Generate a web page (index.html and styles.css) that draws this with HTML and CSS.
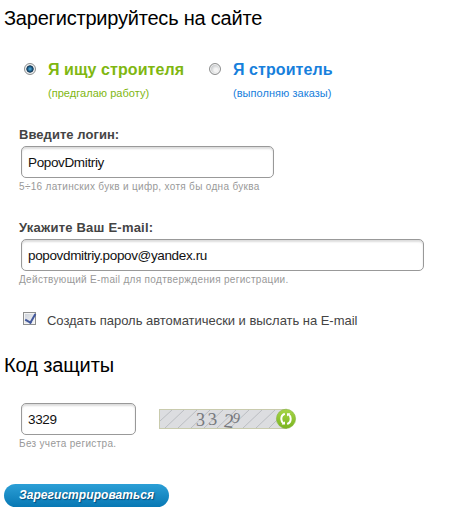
FILE: index.html
```html
<!doctype html>
<html lang="ru">
  <head>
    <meta charset="UTF-8" />
    <title>Регистрация</title>
    <link rel="stylesheet" href="styles.css">
  </head>
  <body>
    <form class="register">
      <h2>Зарегистрируйтесь на сайте</h2>

      <div class="roles">
        <label class="role role-seeker">
          <input type="radio" name="role" checked />
          <span>
            <b>Я ищу строителя</b>
            <small>(предгалаю работу)</small>
          </span>
        </label>
        <label class="role role-builder">
          <input type="radio" name="role" />
          <span>
            <b>Я строитель</b>
            <small>(выполняю заказы)</small>
          </span>
        </label>
      </div>

      <div class="field">
        <label class="title title-login" for="login">Введите логин:</label>
        <input class="text text-login" type="text" id="login" value="PopovDmitriy" />
        <p class="hint hint-login">5÷16 латинских букв и цифр, хотя бы одна буква</p>
      </div>

      <div class="field">
        <label class="title title-email" for="email">Укажите Ваш E-mail:</label>
        <input class="text text-email" type="text" id="email" value="popovdmitriy.popov@yandex.ru" />
        <p class="hint hint-email">Действующий E-mail для подтверждения регистрации.</p>
      </div>

      <label class="auto">
        <input type="checkbox" checked />
        <span>Создать пароль автоматически и выслать на E-mail</span>
      </label>

      <h2 class="h-code">Код защиты</h2>

      <div class="field">
        <div class="code">
          <input class="text text-code" type="text" value="3329" aria-label="Код" />
          <svg class="captcha" width="138" height="22" viewBox="0 0 138 22">
            <defs>
              <linearGradient id="green" x1="0" y1="0" x2="0" y2="1">
                <stop offset="0" stop-color="#a6d548" />
                <stop offset="1" stop-color="#7ab41e" />
              </linearGradient>
            </defs>
            <rect x=".5" y="1.5" width="127" height="19" fill="#dcdde0" stroke="#c9cbad" />
            <path d="M1 13L13 2M6 20L25 2M19 20L38 2M32 20L51 2M45 20L64 2M58 20L77 2M71 20L90 2M84 20L103 2M97 20L116 2M110 20L124 6" stroke="#b3b5ba" stroke-width=".8" />
            <g class="digits">
              <text x="37" y="18.3" font-size="18">3</text>
              <text x="49" y="17" font-size="18" transform="rotate(-5 53 11)">3</text>
              <text x="65" y="19.5" font-size="20" transform="rotate(6 69 13)">2</text>
              <text x="73.5" y="15" font-size="15" transform="rotate(14 77 10)">9</text>
            </g>
            <circle cx="127" cy="10.8" r="9.6" fill="url(#green)" stroke="#86b441" stroke-width=".6" />
            <g fill="none" stroke="#fff" stroke-width="2">
              <path d="M125.8 5.8Q122.3 7 122.3 11Q122.4 14 124.5 15.6" />
              <path d="M128.2 16Q131.7 14.8 131.7 10.8Q131.6 7.8 129.5 6.2" />
            </g>
            <path d="M122.6 16.6H126V13.2ZM131.4 5.2H128V8.6Z" fill="#fff" />
          </svg>
        </div>
        <p class="hint hint-code">Без учета регистра.</p>
      </div>

      <button class="submit" type="button">Зарегистрироваться</button>
    </form>
  </body>
</html>
```
FILE: styles.css
```css
* {
  box-sizing: border-box;
}

body {
  margin: 0;
  background: #fff;
  color: #444;
  font-family: "Liberation Sans", Arial, sans-serif;
  font-size: 13px;
}

.register {
  padding: 6px 4px 0;
}

h2 {
  margin: 0;
  color: #000;
  font-size: 20px;
  font-weight: normal;
  letter-spacing: -0.21px;
  line-height: 24px;
}

.roles {
  display: flex;
  padding-left: 20px;
  margin-top: 30px;
  height: 66px;
}

.role {
  display: flex;
  width: 185px;
}

.role b,
.role small {
  display: block;
  white-space: nowrap;
}

.role b {
  font-size: 16px;
  letter-spacing: 0.08px;
  line-height: 20px;
}

.role small {
  margin-top: 6px;
  font-size: 11px;
  letter-spacing: 0.04px;
  line-height: 14px;
}

.role-seeker {
  color: #7fb711;
}

.role-builder {
  color: #1780dc;
}

input[type="radio"] {
  appearance: none;
  flex: none;
  width: 12px;
  height: 12px;
  margin: 3px 12px 0 0;
  border: 1px solid #8e8f8f;
  border-radius: 50%;
  background: radial-gradient(circle at 60% 60%, #f4f4f4 20%, #c5c8ca 65%);
  box-shadow: inset 0 0 0 1px #f4f4f4;
}

input[type="radio"]:checked {
  background: radial-gradient(circle, #56b6e6 0, #17527c 2.5px, #123049 3.3px, #dce3e7 4px);
}

.field {
  padding-left: 15px;
}

.title {
  display: block;
  font-size: 13px;
  font-weight: bold;
  line-height: 18px;
}

.title-login {
  letter-spacing: 0.05px;
}

.title-email {
  letter-spacing: 0.22px;
}

.text {
  display: block;
  height: 32px;
  margin: 2px 0 0 2px;
  padding: 0 6px;
  border: 1px solid #999;
  border-radius: 5px;
  background: #fff;
  box-shadow: inset 0 2px 2px #ddd;
  color: #111;
  font: 13.5px "Liberation Sans", Arial, sans-serif;
  letter-spacing: -0.36px;
}

.text-login {
  width: 253px;
}

.text-email {
  width: 403px;
}

.text-code {
  width: 115px;
  margin-top: 0;
}

.hint {
  margin: 2px 0 0;
  color: #999;
  font-size: 10px;
  letter-spacing: 0.32px;
  line-height: 14px;
  white-space: nowrap;
}

.hint-login {
  margin-bottom: 25px;
}

.auto {
  display: flex;
  margin: 24px 0 0 19px;
  letter-spacing: -0.03px;
  line-height: 18px;
}

.auto span {
  padding-top: 1px;
}

input[type="checkbox"] {
  appearance: none;
  flex: none;
  width: 13px;
  height: 13px;
  margin: 1px 11px 0 0;
  border: 1px solid #8e8f8f;
  background: linear-gradient(135deg, #cdd2da, #f4f5f7);
  box-shadow: inset 0 0 0 1px #f4f4f4;
}

input[type="checkbox"]:checked::after {
  content: "";
  display: block;
  width: 5px;
  height: 9px;
  margin: 0 0 0 3px;
  border: solid #42589c;
  border-width: 0 2px 2px 0;
  transform: translateY(-1px) rotate(30deg);
}

.h-code {
  margin: 23px 0 26px;
  letter-spacing: -0.1px;
}

.code {
  display: flex;
  align-items: center;
}

.captcha {
  margin-left: 23px;
  overflow: visible;
}

.digits {
  fill: #77797d;
  font-family: "Liberation Serif", serif;
}

.submit {
  display: block;
  width: 165px;
  height: 23px;
  margin-top: 33px;
  padding: 0;
  border: 0;
  border-radius: 12px;
  background: linear-gradient(#2b9fd6, #0878b4);
  color: #fff;
  font: italic bold 12px/21px "Liberation Sans", Arial, sans-serif;
  letter-spacing: 0.06px;
  text-shadow: 1px 1px 1px #034a78;
}
```
